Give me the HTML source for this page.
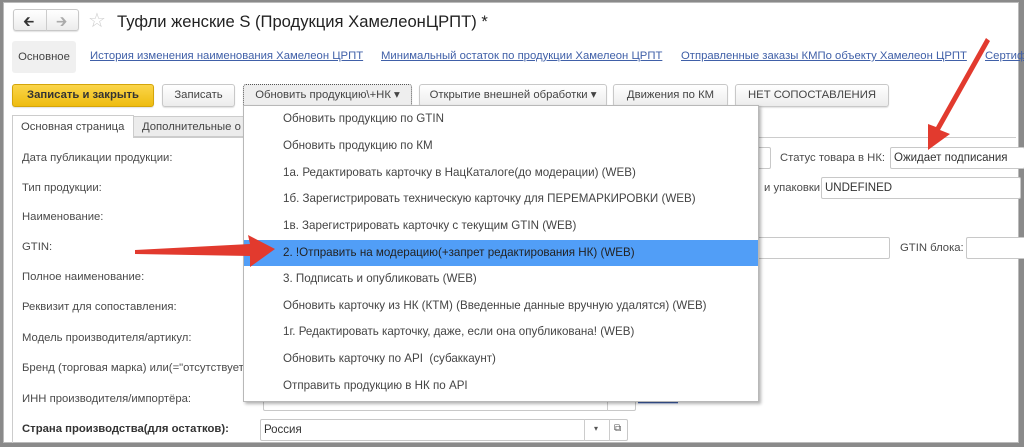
<!DOCTYPE html>
<html><head><meta charset="utf-8"><style>
*{margin:0;padding:0;box-sizing:border-box}
body{width:1024px;height:447px;overflow:hidden;background:#8a8a8a;font-family:"Liberation Sans",sans-serif;font-size:11.3px;color:#444;position:relative}
.win{position:absolute;left:3px;top:2px;width:1016px;height:441px;background:#fff;border:1px solid #bbb}
.a{position:absolute;white-space:nowrap}
.btn{position:absolute;height:23px;border:1px solid #c8c8c8;border-radius:3px;background:linear-gradient(#fff,#ececec);font-size:11.3px;color:#444;text-align:center;line-height:21px;box-shadow:0 1px 1px rgba(0,0,0,.12);white-space:nowrap}
.lnk{position:absolute;color:#4060a8;text-decoration:underline;font-size:11.3px;white-space:nowrap}
.lbl{position:absolute;left:18px;font-size:11.3px;color:#4a4a4a;white-space:nowrap}
.fld{position:absolute;height:22px;border:1px solid #c8c8c8;border-radius:2px;background:#fff;font-size:11.5px;color:#333;line-height:20px;padding-left:3px;white-space:nowrap;overflow:hidden}
.menu{position:absolute;left:243px;top:105px;width:516px;height:297px;background:#fff;border:1px solid #b8b8b8;box-shadow:2px 2px 3px rgba(0,0,0,.3)}
.mi{position:absolute;left:0;width:514px;height:26px;line-height:26px;padding-left:39px;font-size:11.6px;color:#444;white-space:nowrap}
.sel{background:#519ef7;color:#222}
</style></head><body>
<div class="win">
 <div class="btn" style="left:9px;top:6px;width:66px;height:22px;border-radius:3px"></div>
 <div class="a" style="left:42px;top:6px;width:1px;height:22px;background:#ccc"></div>
 <div class="a" style="left:19px;top:8px;font-size:14px;color:#333">&#129136;</div>
 <div class="a" style="left:52px;top:8px;font-size:14px;color:#aaa">&#129138;</div>
 <div class="a" style="left:84px;top:5px;font-size:20px;color:#ccc">☆</div>
 <div class="a" style="left:113px;top:9px;font-size:16.6px;color:#222">Туфли женские S (Продукция ХамелеонЦРПТ) *</div>
 <div class="a" style="left:8px;top:38px;width:64px;height:32px;background:#f0f0f0;border-radius:3px;line-height:32px;text-align:center;color:#444">Основное</div>
 <div class="lnk" style="left:86px;top:47px">История изменения наименования Хамелеон ЦРПТ</div>
 <div class="lnk" style="left:377px;top:47px">Минимальный остаток по продукции Хамелеон ЦРПТ</div>
 <div class="lnk" style="left:677px;top:47px">Отправленные заказы КМПо объекту Хамелеон ЦРПТ</div>
 <div class="lnk" style="left:981px;top:47px">Сертиф</div>
 <div class="btn" style="left:8px;top:81px;width:142px;background:linear-gradient(#fbd54a,#eebc10);border-color:#d4a50a;color:#333;font-weight:bold">Записать и закрыть</div>
 <div class="btn" style="left:158px;top:81px;width:73px">Записать</div>
 <div class="btn" style="left:239px;top:81px;width:169px;border:1px dotted #555;background:#eee">Обновить продукцию\+НК ▾</div>
 <div class="btn" style="left:415px;top:81px;width:188px">Открытие внешней обработки ▾</div>
 <div class="btn" style="left:609px;top:81px;width:115px">Движения по КМ</div>
 <div class="btn" style="left:731px;top:81px;width:154px">НЕТ СОПОСТАВЛЕНИЯ</div>
 <div class="a" style="left:8px;top:134px;width:1004px;height:1px;background:#ccc"></div>
 <div class="a" style="left:8px;top:134px;width:1px;height:306px;background:#ccc"></div>
 <div class="a" style="left:8px;top:112px;width:122px;height:23px;background:#fff;border:1px solid #ccc;border-bottom:none;line-height:22px;padding-left:8px;color:#444">Основная страница</div>
 <div class="a" style="left:130px;top:113px;width:130px;height:21px;background:#ececec;border:1px solid #ccc;border-left:none;line-height:20px;padding-left:8px;color:#444">Дополнительные о</div>
 <div class="lbl" style="top:149px">Дата публикации продукции:</div>
 <div class="lbl" style="top:179px">Тип продукции:</div>
 <div class="lbl" style="top:208px">Наименование:</div>
 <div class="lbl" style="top:238px">GTIN:</div>
 <div class="lbl" style="top:268px">Полное наименование:</div>
 <div class="lbl" style="top:298px">Реквизит для сопоставления:</div>
 <div class="lbl" style="top:329px">Модель производителя/артикул:</div>
 <div class="lbl" style="top:359px">Бренд (торговая марка) или(="отсутствует"</div>
 <div class="lbl" style="top:390px">ИНН производителя/импортёра:</div>
 <div class="lbl" style="top:420px;font-weight:bold;color:#333">Страна производства(для остатков):</div>
 <div class="fld" style="left:740px;top:144px;width:27px"></div>
 <div class="a" style="left:776px;top:149px;color:#4a4a4a">Статус товара в НК:</div>
 <div class="fld" style="left:886px;top:144px;width:135px">Ожидает подписания</div>
 <div class="a" style="left:760px;top:179px;color:#4a4a4a">и упаковки:</div>
 <div class="fld" style="left:817px;top:174px;width:200px">UNDEFINED</div>
 <div class="fld" style="left:740px;top:234px;width:146px"></div>
 <div class="a" style="left:896px;top:239px;color:#4a4a4a">GTIN блока:</div>
 <div class="fld" style="left:962px;top:234px;width:60px"></div>
 <div class="fld" style="left:259px;top:386px;width:373px"></div>
 <div class="a" style="left:603px;top:386px;width:1px;height:22px;background:#ccc"></div>
 <div class="lnk" style="left:634px;top:389px;background:#c8d4ee">Ссылка</div>
 <div class="fld" style="left:256px;top:416px;width:368px">Россия</div>
 <div class="a" style="left:580px;top:416px;width:1px;height:22px;background:#ccc"></div>
 <div class="a" style="left:605px;top:416px;width:1px;height:22px;background:#ccc"></div>
 <div class="a" style="left:590px;top:421px;font-size:8px;color:#555">▾</div>
 <div class="a" style="left:610px;top:420px;font-size:10px;color:#555">⧉</div>
</div>
<div class="menu">
 <div class="mi" style="top:0">Обновить продукцию по GTIN</div>
 <div class="mi" style="top:27px">Обновить продукцию по КМ</div>
 <div class="mi" style="top:54px">1а. Редактировать карточку в НацКаталоге(до модерации) (WEB)</div>
 <div class="mi" style="top:80px">1б. Зарегистрировать техническую карточку для ПЕРЕМАРКИРОВКИ (WEB)</div>
 <div class="mi" style="top:107px">1в. Зарегистрировать карточку с текущим GTIN (WEB)</div>
 <div class="mi sel" style="top:134px">2. !Отправить на модерацию(+запрет редактирования НК) (WEB)</div>
 <div class="mi" style="top:160px">3. Подписать и опубликовать (WEB)</div>
 <div class="mi" style="top:187px">Обновить карточку из НК (КТМ) (Введенные данные вручную удалятся) (WEB)</div>
 <div class="mi" style="top:213px">1г. Редактировать карточку, даже, если она опубликована! (WEB)</div>
 <div class="mi" style="top:240px">Обновить карточку по API&nbsp; (субаккаунт)</div>
 <div class="mi" style="top:267px">Отправить продукцию в НК по API</div>
</div>
<svg style="position:absolute;left:0;top:0" width="1024" height="447">
 <g fill="#e23a2e" stroke="none">
  <polygon points="135,250 250,244 248,235 275,249 250,267 250,256 135,254"/>
  <polygon points="986,38 990,41 940,130 950,134 928,150 928,124 936,127"/>
 </g>
</svg>
</body></html>
